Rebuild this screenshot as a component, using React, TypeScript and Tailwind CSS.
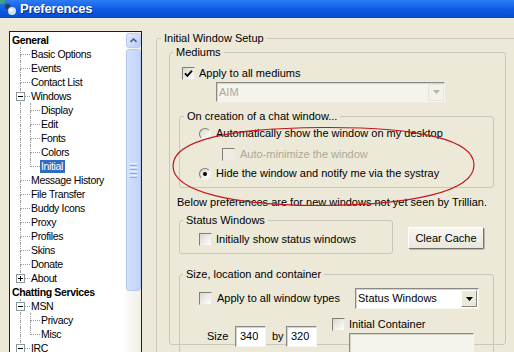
import React from "react";

type Line = "full" | "top" | "none";
type TreeRow = {
  label: string;
  level: 0 | 1 | 2;
  l1?: Line;
  l2?: Line;
  box?: "-" | "+";
  sel?: boolean;
};

const rows: TreeRow[] = [
  { label: "General", level: 0 },
  { label: "Basic Options", level: 1, l1: "full" },
  { label: "Events", level: 1, l1: "full" },
  { label: "Contact List", level: 1, l1: "full" },
  { label: "Windows", level: 1, l1: "full", box: "-" },
  { label: "Display", level: 2, l1: "full", l2: "full" },
  { label: "Edit", level: 2, l1: "full", l2: "full" },
  { label: "Fonts", level: 2, l1: "full", l2: "full" },
  { label: "Colors", level: 2, l1: "full", l2: "full" },
  { label: "Initial", level: 2, l1: "full", l2: "top", sel: true },
  { label: "Message History", level: 1, l1: "full" },
  { label: "File Transfer", level: 1, l1: "full" },
  { label: "Buddy Icons", level: 1, l1: "full" },
  { label: "Proxy", level: 1, l1: "full" },
  { label: "Profiles", level: 1, l1: "full" },
  { label: "Skins", level: 1, l1: "full" },
  { label: "Donate", level: 1, l1: "full" },
  { label: "About", level: 1, l1: "top", box: "+" },
  { label: "Chatting Services", level: 0 },
  { label: "MSN", level: 1, l1: "full", box: "-" },
  { label: "Privacy", level: 2, l1: "full", l2: "full" },
  { label: "Misc", level: 2, l1: "full", l2: "top" },
  { label: "IRC", level: 1, l1: "full", box: "-" },
];

// one column of dotted connector lines
const Connector = ({ line, stub, lead }: { line: Line; stub: boolean; lead: string }) => (
  <div className="flex h-full shrink-0">
    <div className={lead} />
    <div className={`flex h-full flex-col ${stub ? "w-[10px]" : "w-[1px]"}`}>
      <div
        className={`h-[8px] border-l border-dotted ${line !== "none" ? "border-l-[#9c9c9c]" : "border-l-transparent"} ${stub ? "border-b border-b-[#9c9c9c]" : ""}`}
      />
      <div className={`h-[6px] border-l border-dotted ${line === "full" ? "border-l-[#9c9c9c]" : "border-l-transparent"}`} />
    </div>
  </div>
);

const Expander = ({ sign }: { sign: "-" | "+" }) => (
  <span className="absolute left-[6px] top-[3px] flex h-[9px] w-[9px] items-center justify-center border border-[#8d989a] bg-white">
    <svg width="5" height="5" viewBox="0 0 5 5">
      <path d="M0 2.5H5" stroke="#000" strokeWidth="1" />
      {sign === "+" && <path d="M2.5 0V5" stroke="#000" strokeWidth="1" />}
    </svg>
  </span>
);

const Tree = () => (
  <div className="ml-[9px] mt-[13px] flex h-[330px] w-[133px] shrink-0 border-l border-r border-t border-[#1e1e1e] bg-white text-[10.5px] tracking-[-0.35px]">
    <div className="w-[115px] pt-[1px]">
      {rows.map((r) => (
        <div key={r.label} className="relative flex h-[14px] items-center">
          {r.level === 0 && <span className="ml-[2px] font-bold leading-[13px]">{r.label}</span>}
          {r.level >= 1 && (
            <Connector line={r.l1 ?? "none"} stub={r.level === 1} lead="w-[10px]" />
          )}
          {r.level === 1 && r.box && <Expander sign={r.box} />}
          {r.level === 2 && <div className="w-[9px] shrink-0" />}
          {r.level === 2 && <Connector line={r.l2 ?? "none"} stub lead="w-[0px]" />}
          {r.level >= 1 && (
            <span
              className={`flex h-[13px] items-center px-[1px] leading-[13px] ${r.sel ? "bg-[#316AC5] pr-[2px] text-white" : ""}`}
            >
              {r.label}
            </span>
          )}
        </div>
      ))}
    </div>
    <div className="flex h-full w-[16px] flex-col items-center bg-linear-to-r from-[#fcfcfa] to-[#efeee6]">
      <div className="mt-[1px] flex h-[15px] w-[15px] items-center justify-center rounded-[3px] border border-[#b7caf3] bg-linear-to-br from-[#e3ebfe] to-[#b8ccf7]">
        <svg width="7" height="5" viewBox="0 0 7 5">
          <path d="M0.5 4L3.5 1L6.5 4" fill="none" stroke="#4d6185" strokeWidth="1.6" />
        </svg>
      </div>
      <div className="mt-[1px] flex h-[242px] w-[15px] flex-col items-center justify-center gap-[1px] rounded-[3px] border border-[#b3c7f2] bg-linear-to-r from-[#d3e0fd] to-[#c2d4fb]">
        <span className="h-[1px] w-[7px] bg-[#eef3fe]" />
        <span className="h-[1px] w-[7px] bg-[#8faae6]" />
        <span className="h-[1px] w-[7px] bg-[#eef3fe]" />
        <span className="h-[1px] w-[7px] bg-[#8faae6]" />
        <span className="h-[1px] w-[7px] bg-[#eef3fe]" />
        <span className="h-[1px] w-[7px] bg-[#8faae6]" />
        <span className="h-[1px] w-[7px] bg-[#eef3fe]" />
        <span className="h-[1px] w-[7px] bg-[#8faae6]" />
      </div>
    </div>
  </div>
);

const Check = ({ checked, disabled }: { checked?: boolean; disabled?: boolean }) => (
  <span
    className={`flex h-[13px] w-[13px] shrink-0 items-center justify-center border border-b-[#eceae0] border-l-[#7f7e78] border-r-[#eceae0] border-t-[#7f7e78] ${disabled ? "bg-[#efede3]" : "bg-linear-to-br from-[#d9d8cf] to-white"}`}
  >
    {checked && (
      <svg width="9" height="9" viewBox="0 0 9 9">
        <path d="M1 4.3L3.4 6.8L8 1.6" fill="none" stroke="#000" strokeWidth="1.9" />
      </svg>
    )}
  </span>
);

const Radio = ({ on }: { on?: boolean }) => (
  <span className="flex h-[12px] w-[12px] shrink-0 items-center justify-center rounded-full border border-b-[#f4f3ee] border-l-[#7f7e78] border-r-[#f4f3ee] border-t-[#7f7e78] bg-linear-to-br from-[#d9d8cf] to-white">
    {on && <span className="h-[4px] w-[4px] rounded-full bg-black" />}
  </span>
);

const Group = ({
  label,
  className,
  legend = "ml-[3px]",
  children,
}: {
  label: string;
  className: string;
  legend?: string;
  children: React.ReactNode;
}) => (
  <fieldset className={`min-w-0 shrink-0 rounded-[3px] border border-[#c9c7ba] ${className}`}>
    <legend className={`px-[3px] leading-[14px] ${legend}`}>{label}</legend>
    {children}
  </fieldset>
);

const sunken =
  "border border-b-[#f6f5f0] border-l-[#8a8984] border-r-[#f6f5f0] border-t-[#8a8984] shadow-[inset_1px_1px_0_#d6d3c8]";

const DropArrow = ({ color }: { color: string }) => (
  <svg width="7" height="4" viewBox="0 0 7 4">
    <path d="M0 0H7L3.5 4Z" fill={color} />
  </svg>
);

const TitleBar = () => (
  <div className="flex h-[18px] items-center bg-linear-to-b from-[#2d7cf4] via-[#0e5ce6] to-[#0849cf]">
    <svg width="18" height="18" viewBox="0 0 18 18" className="shrink-0">
      <circle cx="2" cy="1" r="3" fill="#3fa37a" />
      <circle cx="7.5" cy="6.5" r="2.8" fill="#2c3f5c" />
      <circle cx="12" cy="11" r="4" fill="#cfe3f2" />
      <circle cx="11" cy="10" r="1.6" fill="#ffffff" />
    </svg>
    <span className="ml-[2px] text-[13px] font-bold leading-[18px] tracking-[-0.2px] text-white [text-shadow:1px_1px_0_#0a2a80]">
      Preferences
    </span>
  </div>
);

export default function App() {
  return (
    <div className="relative h-[352px] w-[514px] overflow-hidden bg-[#ECE9D8] font-['Liberation_Sans',Arial,sans-serif] text-[11px] text-black">
      <TitleBar />
      <div className="flex items-start">
        <Tree />
        <Group label="Initial Window Setup" className="ml-[14px] mt-[13px] w-[370px] h-[330px]" legend="ml-[4px]">
          <Group label="Mediums" className="ml-[12px] w-[337px] h-[300px]">
            <div className="ml-[12px] mt-[8px] flex h-[13px] items-center gap-[4px]">
              <Check checked />
              <span>Apply to all mediums</span>
            </div>
            <div className={`ml-[46px] mt-[2px] flex h-[20px] w-[229px] items-center justify-between ${sunken} bg-[#f4f3ec]`}>
              <span className="ml-[2px] text-[#aca899]">AIM</span>
              <span className="flex h-[17px] w-[16px] items-center justify-center border border-[#e8e6dc] bg-[#f3f2ea]">
                <DropArrow color="#b8b5a6" />
              </span>
            </div>

            <Group label="On creation of a chat window..." className="ml-[9px] mt-[7px] w-[315px] pb-[7px]" legend="ml-[4px]">
              <div className="ml-[19px] mt-[4px] flex h-[13px] items-center gap-[5px]">
                <Radio />
                <span>Automatically show the window on my desktop</span>
              </div>
              <div className="ml-[42px] mt-[8px] flex h-[13px] items-center gap-[5px]">
                <Check disabled />
                <span className="text-[#aca899]">Auto-minimize the window</span>
              </div>
              <div className="ml-[19px] mt-[6px] flex h-[13px] items-center gap-[5px]">
                <Radio on />
                <span>Hide the window and notify me via the systray</span>
              </div>
            </Group>

            <p className="ml-[7px] mt-[7px] leading-[14px]">
              Below preferences are for new windows not yet seen by Trillian.
            </p>

            <div className="mt-[4px] flex items-start">
              <Group label="Status Windows" className="ml-[9px] w-[214px] pb-[7px]">
                <div className="ml-[19px] mt-[6px] flex h-[13px] items-center gap-[4px]">
                  <Check />
                  <span>Initially show status windows</span>
                </div>
              </Group>
              <button className="ml-[15px] mt-[14px] h-[22px] w-[76px] rounded-[2px] border border-b-[#75736a] border-l-white border-r-[#75736a] border-t-white bg-linear-to-b from-[#f7f6f1] to-[#e9e7dd] text-[11px] shadow-[1px_1px_0_#b9b6aa]">
                Clear Cache
              </button>
            </div>

            <Group label="Size, location and container" className="ml-[9px] mt-[13px] w-[315px] h-[100px]">
              <div className="mt-[7px] flex h-[21px] items-center">
                <div className="ml-[19px] flex w-[156px] items-center gap-[5px]">
                  <Check />
                  <span>Apply to all window types</span>
                </div>
                <div className={`flex h-[21px] w-[124px] items-center justify-between ${sunken} bg-white`}>
                  <span className="ml-[2px]">Status Windows</span>
                  <span className="mr-[1px] flex h-[17px] w-[16px] items-center justify-center border border-b-[#8a887e] border-l-white border-r-[#8a887e] border-t-white bg-[#ece9d8]">
                    <DropArrow color="#000" />
                  </span>
                </div>
              </div>
              <div className="mt-[9px] flex items-start">
                <div className="ml-[27px] mt-[8px] flex h-[21px] items-center">
                  <span className="w-[28px]">Size</span>
                  <span className={`flex h-[21px] w-[31px] items-center bg-white pl-[4px] ${sunken}`}>340</span>
                  <span className="ml-[6px] w-[14px]">by</span>
                  <span className={`flex h-[21px] w-[31px] items-center bg-white pl-[4px] ${sunken}`}>320</span>
                </div>
                <div className="ml-[15px] flex flex-col">
                  <div className="flex h-[13px] items-center gap-[4px]">
                    <Check />
                    <span>Initial Container</span>
                  </div>
                  <div className={`ml-[17px] mt-[2px] h-[21px] w-[125px] bg-[#f4f3ec] ${sunken}`} />
                </div>
              </div>
            </Group>
          </Group>
        </Group>
      </div>

      <svg className="pointer-events-none absolute left-0 top-0" width="514" height="352" viewBox="0 0 514 352">
        <path
          d="M173 166 C173 140 230 128 323 127.5 C420 127 474 140 474 165 C474 192 410 205 323 205.5 C235 206 173 192 173 166 Z"
          fill="none"
          stroke="#c4161c"
          strokeWidth="1.2"
        />
      </svg>
    </div>
  );
}
